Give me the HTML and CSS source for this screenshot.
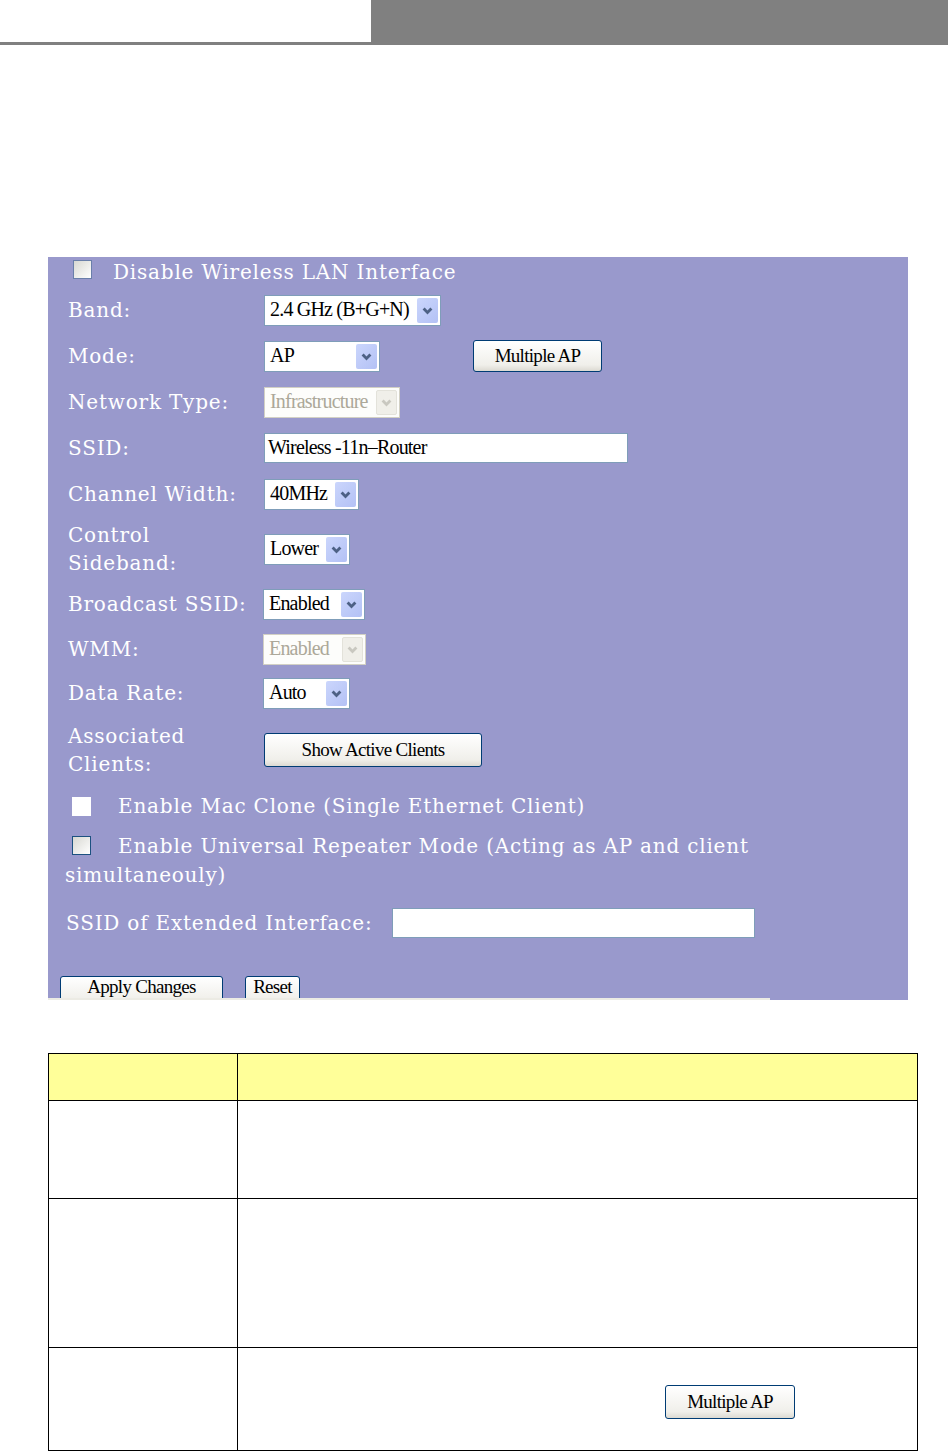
FILE: index.html
```html
<!DOCTYPE html>
<html lang="en">
<head>
    <meta charset="UTF-8">
    <title>Wireless Basic Settings</title>
    <link rel="stylesheet" href="styles.css">
</head>
<body>
    <!-- Page header bar -->
    <div class="topbar">
        <div class="topbar-left"></div>
        <div class="topbar-right"></div>
    </div>

    <!-- Settings screenshot -->
    <div class="panel">
        <div class="row row-first">
            <span class="checkbox first"></span>
            <span class="check-label">Disable Wireless LAN Interface</span>
        </div>

        <div class="row">
            <span class="label">Band:</span>
            <div class="select w-band">
                <span class="select-text">2.4 GHz (B+G+N)</span>
                <span class="select-arrow"><svg viewBox="0 0 10 10"><path d="M2 3.5 L5 6.5 L8 3.5"/></svg></span>
            </div>
        </div>

        <div class="row">
            <span class="label">Mode:</span>
            <div class="select w-mode">
                <span class="select-text">AP</span>
                <span class="select-arrow"><svg viewBox="0 0 10 10"><path d="M2 3.5 L5 6.5 L8 3.5"/></svg></span>
            </div>
            <button class="btn btn-multi">Multiple AP</button>
        </div>

        <div class="row">
            <span class="label">Network Type:</span>
            <div class="select disabled w-net">
                <span class="select-text">Infrastructure</span>
                <span class="select-arrow"><svg viewBox="0 0 10 10"><path d="M2 3.5 L5 6.5 L8 3.5"/></svg></span>
            </div>
        </div>

        <div class="row">
            <span class="label">SSID:</span>
            <div class="textbox w-ssid">Wireless -11n–Router</div>
        </div>

        <div class="row">
            <span class="label">Channel Width:</span>
            <div class="select w-chan">
                <span class="select-text">40MHz</span>
                <span class="select-arrow"><svg viewBox="0 0 10 10"><path d="M2 3.5 L5 6.5 L8 3.5"/></svg></span>
            </div>
        </div>

        <div class="row row-tall">
            <span class="label two-line">Control<br>Sideband:</span>
            <div class="select w-side">
                <span class="select-text">Lower</span>
                <span class="select-arrow"><svg viewBox="0 0 10 10"><path d="M2 3.5 L5 6.5 L8 3.5"/></svg></span>
            </div>
        </div>

        <div class="row">
            <span class="label">Broadcast SSID:</span>
            <div class="select w-bcast shift">
                <span class="select-text">Enabled</span>
                <span class="select-arrow"><svg viewBox="0 0 10 10"><path d="M2 3.5 L5 6.5 L8 3.5"/></svg></span>
            </div>
        </div>

        <div class="row row-short">
            <span class="label">WMM:</span>
            <div class="select disabled w-wmm shift">
                <span class="select-text">Enabled</span>
                <span class="select-arrow"><svg viewBox="0 0 10 10"><path d="M2 3.5 L5 6.5 L8 3.5"/></svg></span>
            </div>
        </div>

        <div class="row row-short">
            <span class="label">Data Rate:</span>
            <div class="select w-rate shift">
                <span class="select-text">Auto</span>
                <span class="select-arrow"><svg viewBox="0 0 10 10"><path d="M2 3.5 L5 6.5 L8 3.5"/></svg></span>
            </div>
        </div>

        <div class="row row-assoc">
            <span class="label two-line">Associated<br>Clients:</span>
            <button class="btn btn-clients">Show Active Clients</button>
        </div>

        <div class="row row-mac">
            <span class="checkbox plain"></span>
            <span class="check-label wide">Enable Mac Clone (Single Ethernet Client)</span>
        </div>

        <div class="wrap-row">
            <span class="checkbox inline"></span><span class="check-label wide">Enable Universal Repeater Mode (Acting as AP and client</span>
            simultaneouly)
        </div>

        <div class="row row-ext">
            <span class="label ext-label">SSID of Extended Interface:</span>
            <div class="textbox w-ext"></div>
        </div>

        <div class="actions">
            <button class="btn btn-apply">Apply Changes</button>
            <button class="btn btn-reset">Reset</button>
        </div>
    </div>

    <!-- Description table -->
    <table class="desc">
        <tr class="head"><td class="c1"></td><td></td></tr>
        <tr class="r1"><td class="c1"></td><td></td></tr>
        <tr class="r2"><td class="c1"></td><td></td></tr>
        <tr class="r3">
            <td class="c1"></td>
            <td><button class="btn btn-multi-table">Multiple AP</button></td>
        </tr>
    </table>
</body>
</html>
```

FILE: styles.css
```css
/* Base */
body, html {
    margin: 0;
    padding: 0;
    background: #fff;
}
* {
    box-sizing: border-box;
}

/* Top bar */
.topbar {
    display: flex;
    height: 45px;
}
.topbar-left {
    width: 371px;
    height: 45px;
    background: #fff;
    border-bottom: 3px solid #808080;
}
.topbar-right {
    flex: 1;
    background: #808080;
}

/* Purple settings panel */
.panel {
    position: relative;
    width: 860px;
    height: 743px;
    margin: 212px 0 0 48px;
    background: #9999cc;
    overflow: hidden;
    font-family: "DejaVu Serif", serif;
    font-size: 20px;
    letter-spacing: 0.8px;
    color: #fff;
}
.panel::after {
    content: "";
    position: absolute;
    left: 0;
    bottom: 0;
    width: 722px;
    height: 2px;
    background: #ecebe4;
}

.row {
    display: flex;
    align-items: center;
    height: 46px;
    padding-left: 20px;
}
.row-first {
    height: 30px;
    padding-left: 25px;
}
.row-tall {
    height: 64px;
}
.row-short {
    height: 44px;
}
.row-assoc {
    height: 70px;
}
.row-mac {
    height: 42px;
    padding-left: 24px;
}
.row-ext {
    height: 44px;
    margin-top: 10px;
    padding-left: 18px;
}

.label {
    width: 196px;
    flex-shrink: 0;
    white-space: nowrap;
}
.two-line {
    line-height: 28px;
}
.ext-label {
    width: 326px;
}

/* Checkboxes */
.checkbox {
    display: inline-block;
    width: 19px;
    height: 19px;
    border: 1px solid #1c5180;
    background: linear-gradient(135deg, #d8d8d2, #fff);
    flex-shrink: 0;
}
.checkbox.first {
    margin-top: -6px;
    border-color: #6a7faa;
}
.checkbox.plain {
    border: none;
    background: #fff;
}
.checkbox.inline {
    vertical-align: -2px;
    margin-left: 7px;
}
.check-label {
    margin-left: 21px;
    white-space: nowrap;
}
.check-label.wide {
    margin-left: 27px;
}
.wrap-row {
    padding: 5px 0 0 17px;
    line-height: 29px;
    width: 740px;
    height: 64px;
}

/* Select boxes */
.select {
    display: flex;
    height: 31px;
    background: #fff;
    border: 1px solid #7f9db9;
    color: #000;
    font-family: "Liberation Serif", serif;
    font-size: 20px;
    letter-spacing: -0.8px;
}
.select.shift {
    margin-left: -1px;
}
.select-text {
    flex: 1;
    padding-left: 5px;
    line-height: 27px;
    white-space: nowrap;
    overflow: hidden;
}
.select-arrow {
    width: 21px;
    margin: 2px 2px 2px 0;
    border-radius: 2px;
    background: linear-gradient(135deg, #cbd6fc, #b3c1f5);
    display: flex;
    align-items: center;
    justify-content: center;
}
.select-arrow svg {
    width: 13px;
    height: 13px;
    fill: none;
    stroke: #4d6185;
    stroke-width: 2.2;
}
.select.disabled {
    border-color: #d2d0c4;
    color: #aca899;
    background: #fdfdfb;
}
.select.disabled .select-arrow {
    background: #f0efe9;
    border: 1px solid #e3e2da;
}
.select.disabled .select-arrow svg {
    stroke: #c9c8c0;
}

.w-band { width: 177px; }
.w-mode { width: 116px; }
.w-net { width: 136px; }
.w-chan { width: 95px; }
.w-side { width: 86px; }
.w-bcast { width: 102px; }
.w-wmm { width: 103px; }
.w-rate { width: 87px; }

/* Text inputs */
.textbox {
    height: 30px;
    background: #fff;
    border: 1px solid #7f9db9;
    color: #000;
    font-family: "Liberation Serif", serif;
    font-size: 20px;
    letter-spacing: -0.8px;
    padding-left: 3px;
    line-height: 26px;
}
.w-ssid { width: 364px; }
.w-ext { width: 363px; }

/* Buttons */
.btn {
    height: 32px;
    padding: 0;
    background: linear-gradient(#ffffff, #f0efea 80%, #dcdad2);
    border: 1px solid #003c74;
    border-radius: 3px;
    color: #000;
    font-family: "Liberation Serif", serif;
    font-size: 19px;
    letter-spacing: -0.7px;
    line-height: 26px;
}
.btn-multi {
    width: 129px;
    margin-left: 93px;
}
.btn-clients {
    width: 218px;
    height: 34px;
}
.actions {
    display: flex;
    align-items: flex-start;
    gap: 22px;
    padding-left: 12px;
    margin-top: 31px;
}
.btn-apply,
.btn-reset {
    flex-shrink: 0;
    height: 30px;
    padding-bottom: 8px;
    line-height: 18px;
}
.btn-apply {
    width: 163px;
}
.btn-reset {
    width: 55px;
}

/* Description table */
.desc {
    width: 870px;
    margin: 53px 0 0 48px;
    border-collapse: collapse;
}
.desc td {
    border: 1px solid #000;
    padding: 0;
}
.desc .c1 {
    width: 189px;
}
.desc .head td {
    background: #ffff99;
    height: 47px;
}
.desc .r1 td { height: 98px; }
.desc .r2 td { height: 149px; }
.desc .r3 td { height: 103px; }
.btn-multi-table {
    width: 130px;
    height: 34px;
    margin-left: 427px;
    margin-top: 5px;
}
```
